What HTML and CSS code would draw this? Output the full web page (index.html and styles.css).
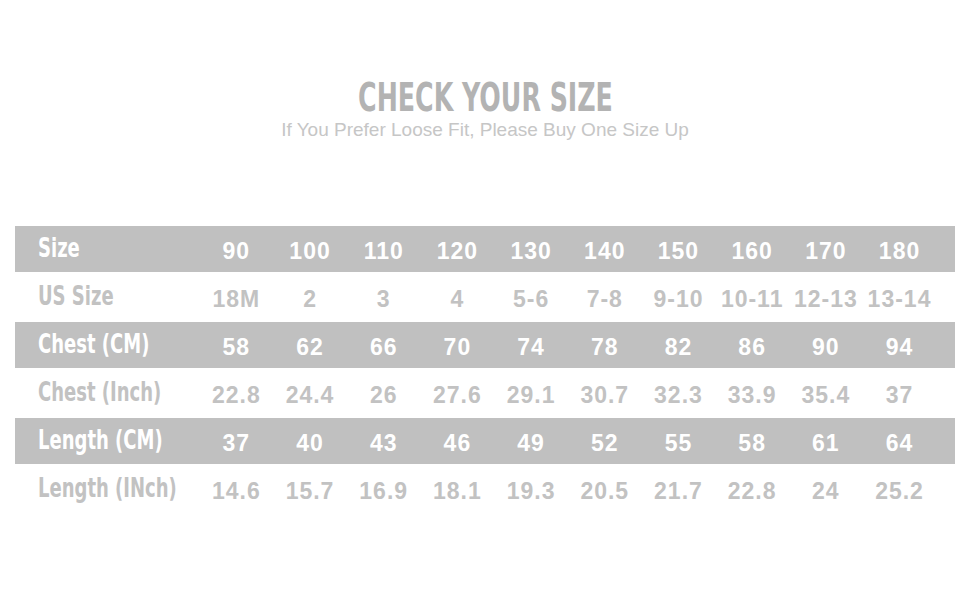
FILE: index.html
```html
<!DOCTYPE html>
<html>
<head>
<meta charset="utf-8">
<link rel="stylesheet" href="styles.css">
</head>
<body>
<div class="page">
  <header class="head">
    <h1 class="title"><span>CHECK YOUR SIZE</span></h1>
    <p class="sub">If You Prefer Loose Fit, Please Buy One Size Up</p>
  </header>
  <div class="chart">
    <div class="row dark"><div class="lab"><span>Size</span></div><div>90</div><div>100</div><div>110</div><div>120</div><div>130</div><div>140</div><div>150</div><div>160</div><div>170</div><div>180</div></div>
    <div class="row light"><div class="lab"><span>US Size</span></div><div>18M</div><div>2</div><div>3</div><div>4</div><div>5-6</div><div>7-8</div><div>9-10</div><div>10-11</div><div>12-13</div><div>13-14</div></div>
    <div class="row dark"><div class="lab"><span>Chest (CM)</span></div><div>58</div><div>62</div><div>66</div><div>70</div><div>74</div><div>78</div><div>82</div><div>86</div><div>90</div><div>94</div></div>
    <div class="row light"><div class="lab"><span>Chest (Inch)</span></div><div>22.8</div><div>24.4</div><div>26</div><div>27.6</div><div>29.1</div><div>30.7</div><div>32.3</div><div>33.9</div><div>35.4</div><div>37</div></div>
    <div class="row dark"><div class="lab"><span>Length (CM)</span></div><div>37</div><div>40</div><div>43</div><div>46</div><div>49</div><div>52</div><div>55</div><div>58</div><div>61</div><div>64</div></div>
    <div class="row light"><div class="lab"><span>Length (INch)</span></div><div>14.6</div><div>15.7</div><div>16.9</div><div>18.1</div><div>19.3</div><div>20.5</div><div>21.7</div><div>22.8</div><div>24</div><div>25.2</div></div>
  </div>
</div>
</body>
</html>
```

FILE: styles.css
```css
html, body {
  margin: 0;
  padding: 0;
  background: #ffffff;
}
.page {
  width: 970px;
  height: 600px;
  padding-top: 77px;
  box-sizing: border-box;
}
.head {
  text-align: center;
}
.title {
  margin: 0;
  font-family: "DejaVu Sans Condensed", "DejaVu Sans", sans-serif;
  font-stretch: condensed;
  font-weight: bold;
  font-size: 38.5px;
  line-height: 42px;
  color: #b3b3b3;
}
.title span {
  display: inline-block;
  transform: scaleX(0.73);
  transform-origin: center;
  white-space: nowrap;
}
.sub {
  margin: 0;
  font-family: "Liberation Sans", Arial, sans-serif;
  font-size: 19px;
  line-height: 22px;
  color: #c6c6c6;
}
.chart {
  margin-top: 85px;
  margin-left: 15px;
  width: 940px;
}
.row {
  display: grid;
  grid-template-columns: 184px repeat(10, 73.7px) 1fr;
  align-items: center;
  font-family: "Liberation Sans", Arial, sans-serif;
  font-weight: bold;
  font-size: 23px;
  letter-spacing: 1px;
  text-align: center;
}
.row > div {
  padding-top: 5px;
  padding-left: 1px;
  white-space: nowrap;
}
.row.dark {
  height: 46px;
  background: #c0c0c0;
  color: #ffffff;
}
.row.light {
  height: 50px;
  background: #ffffff;
  color: #c2c2c2;
}
.row > .lab {
  text-align: left;
  padding-left: 23px;
  padding-top: 0;
  margin-top: -3px;
  letter-spacing: 0;
  font-family: "DejaVu Sans Condensed", "DejaVu Sans", sans-serif;
  font-stretch: condensed;
  font-size: 26px;
}
.lab span {
  display: inline-block;
  transform: scaleX(0.77);
  transform-origin: left center;
}
```
